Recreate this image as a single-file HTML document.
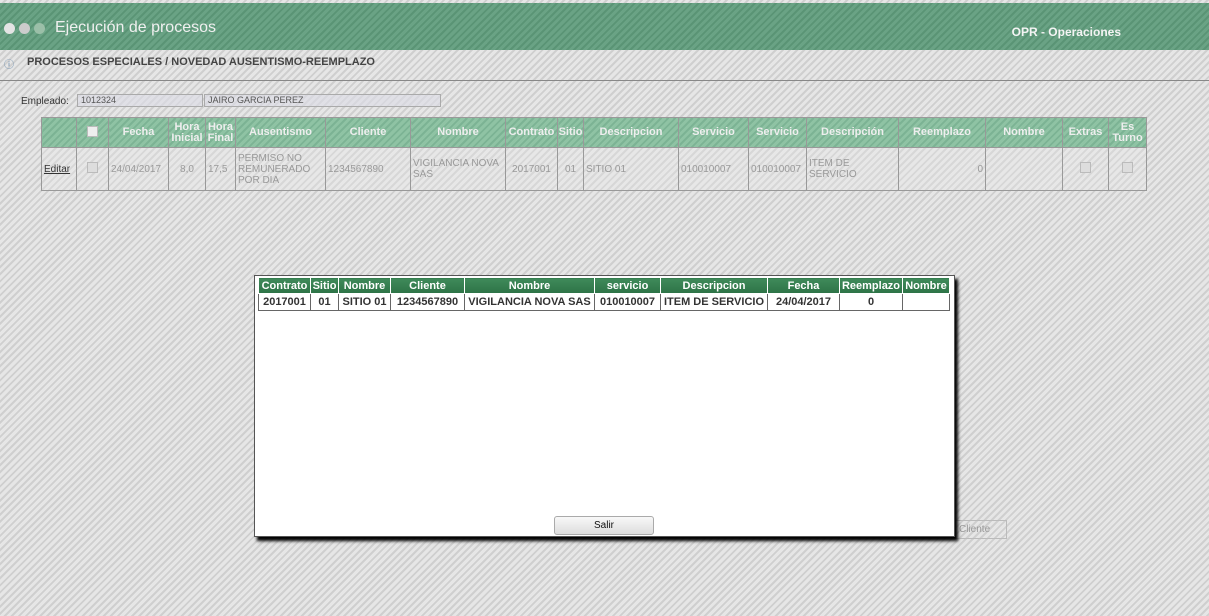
<!DOCTYPE html>
<html><head><meta charset="utf-8"><style>
*{margin:0;padding:0;box-sizing:border-box}
body{width:1209px;height:616px;overflow:hidden;position:relative;font-family:"Liberation Sans",sans-serif;
background:repeating-linear-gradient(135deg,#e6e6e6 0 3px,#cfcfcf 3px 5px);}
.hdr{position:absolute;left:0;top:3px;width:1209px;height:47px;background:repeating-linear-gradient(135deg,#6aa385 0 3px,#5a9475 3px 5px);}
.hdr .t{position:absolute;left:55px;top:16px;color:#f0f0f0;font-size:16px}
.hdr .r{position:absolute;right:88px;top:22px;color:#f4f4f4;font-size:12px;font-weight:bold}
.dot{position:absolute;top:20px;width:11px;height:11px;border-radius:50%;background:#e4e4e4}
.bc{position:absolute;left:27px;top:56px;font-size:11px;font-weight:bold;color:#444}
.line{position:absolute;left:0;top:80px;width:1209px;height:1px;background:#888}
.emp{position:absolute;left:21px;top:96px;font-size:10px;color:#333}
.inp{position:absolute;top:94px;height:13px;border:1px solid #aaa;background:rgba(220,220,230,.6);font-size:9px;color:#555;padding-left:3px;line-height:11px}
table{border-collapse:collapse;position:absolute}
.m td,.m th{border:1px solid #999;font-size:10px;color:#999;font-weight:normal}
.m th{background:repeating-linear-gradient(135deg,#8fc3a4 0 3px,#7cb394 3px 5px);color:#eee;font-weight:bold;font-size:11px;height:30px;line-height:11px}
.m td{height:43px;padding:0 2px;background:rgba(235,235,235,.3)}
.cb{display:inline-block;width:11px;height:11px;border:1px solid #bbb;background:#ddd}
.modal{position:absolute;left:254px;top:275px;width:701px;height:262px;background:#fff;border:1px solid #555;box-shadow:3px 4px 3px #000}
.p th{background:linear-gradient(#3f8a5a,#2d7346);color:#fff;font-size:11px;font-weight:bold;height:16px;border:1px solid #fff;padding:0}
.p td{border:1px solid #666;font-size:11px;font-weight:bold;color:#333;height:17px;text-align:center;padding:0}
.btn{position:absolute;left:299px;top:240px;width:100px;height:19px;border:1px solid #aaa;border-radius:3px;background:linear-gradient(#f8f8f8,#ddd);font-size:10px;text-align:center;line-height:18px;color:#111}
</style></head><body>
<div class="hdr"><div class="dot" style="left:4px"></div><div class="dot" style="left:19px;background:#ccc"></div><div class="dot" style="left:34px;background:#9bbfa8"></div>
<div class="t">Ejecución de procesos</div><div class="r">OPR - Operaciones</div></div>
<div style="position:absolute;left:4px;top:56px;font-size:10px;color:#68a">ⓘ</div>
<div class="bc">PROCESOS ESPECIALES / NOVEDAD AUSENTISMO-REEMPLAZO</div>
<div class="line"></div>
<div class="emp">Empleado:</div>
<div class="inp" style="left:77px;width:126px">1012324</div>
<div class="inp" style="left:204px;width:237px">JAIRO GARCIA PEREZ</div>
<table class="m" style="left:41px;top:117px;width:1106px">
<tr><th style="width:35px"></th><th style="width:32px"><span class="cb" style="background:#eee"></span></th><th style="width:60px">Fecha</th><th style="width:37px">Hora Inicial</th><th style="width:30px">Hora Final</th><th style="width:90px">Ausentismo</th><th style="width:85px">Cliente</th><th style="width:95px">Nombre</th><th style="width:52px">Contrato</th><th style="width:26px">Sitio</th><th style="width:95px">Descripcion</th><th style="width:70px">Servicio</th><th style="width:58px">Servicio</th><th style="width:92px">Descripción</th><th style="width:87px">Reemplazo</th><th style="width:77px">Nombre</th><th style="width:46px">Extras</th><th>Es Turno</th></tr>
<tr><td style="color:#333;text-decoration:underline">Editar</td><td style="text-align:center"><span class="cb"></span></td><td>24/04/2017</td><td style="text-align:center">8,0</td><td>17,5</td><td>PERMISO NO REMUNERADO POR DIA</td><td>1234567890</td><td>VIGILANCIA NOVA SAS</td><td style="text-align:center">2017001</td><td style="text-align:center">01</td><td>SITIO 01</td><td>010010007</td><td>010010007</td><td>ITEM DE SERVICIO</td><td style="text-align:right">0</td><td></td><td style="text-align:center"><span class="cb"></span></td><td style="text-align:center"><span class="cb"></span></td></tr>
</table>
<div style="position:absolute;left:955px;top:520px;width:52px;height:19px;border:1px solid #bbb;font-size:10px;color:#999;line-height:18px;padding-left:3px">Cliente</div>
<div class="modal">
<table class="p" style="left:3px;top:1px;width:692px">
<tr><th style="width:52px">Contrato</th><th style="width:28px">Sitio</th><th style="width:52px">Nombre</th><th style="width:74px">Cliente</th><th style="width:130px">Nombre</th><th style="width:66px">servicio</th><th style="width:107px">Descripcion</th><th style="width:72px">Fecha</th><th style="width:63px">Reemplazo</th><th>Nombre</th></tr>
<tr><td>2017001</td><td>01</td><td>SITIO 01</td><td>1234567890</td><td>VIGILANCIA NOVA SAS</td><td>010010007</td><td>ITEM DE SERVICIO</td><td>24/04/2017</td><td>0</td><td></td></tr>
</table>
<div class="btn">Salir</div>
</div>
</body></html>
